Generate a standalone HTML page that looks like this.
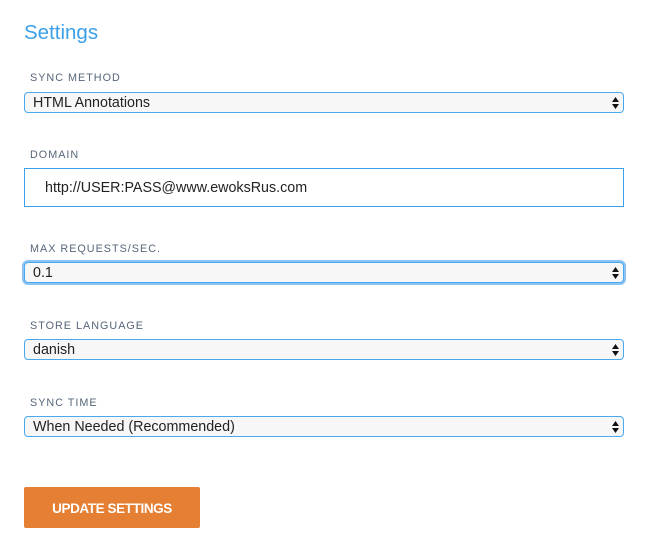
<!DOCTYPE html>
<html><head><style>
body{margin:0;background:#fff;font-family:"Liberation Sans",sans-serif;width:656px;height:555px;position:relative;overflow:hidden}
h1{position:absolute;left:24px;top:21px;margin:0;font-size:20.5px;font-weight:normal;color:#3ba0e8}
.l{position:absolute;left:30px;font-size:10.8px;letter-spacing:1px;color:#56667a}
.s{position:absolute;left:24px;width:598px;height:19px;border:1px solid #49a8ee;border-radius:4px;background:#f7f7f7;font-size:14.3px;color:#222;line-height:19px;box-sizing:content-box}
.s span{position:absolute;left:8px;top:1px}
.ar{position:absolute;right:4px;top:4px;width:7px;height:12px}
.f{box-shadow:0 0 0 2px #8cc3f5}
.i{position:absolute;left:24px;top:168px;width:598px;height:37px;border:1px solid #3aa0ec;font-size:14.3px;color:#222;line-height:38px}
.b{position:absolute;left:24px;top:487px;width:176px;height:41px;background:#e57f33;border-radius:2px;color:#fff;font-size:13.5px;letter-spacing:-0.4px;font-weight:bold;text-align:center;line-height:43px}
</style></head><body>
<h1>Settings</h1>
<div class="l" style="top:72px">SYNC METHOD</div>
<div class="s" style="top:92px"><span>HTML Annotations</span><svg class="ar" viewBox="0 0 7 12"><path d="M3.5 0L7 5H0z M0 7H7L3.5 12z" fill="#111"/></svg></div>
<div class="l" style="top:149px">DOMAIN</div>
<div class="i"><span style="position:absolute;left:20px">http://USER:PASS@www.ewoksRus.com</span></div>
<div class="l" style="top:243px">MAX REQUESTS/SEC.</div>
<div class="s f" style="top:262px"><span>0.1</span><svg class="ar" viewBox="0 0 7 12"><path d="M3.5 0L7 5H0z M0 7H7L3.5 12z" fill="#111"/></svg></div>
<div class="l" style="top:320px">STORE LANGUAGE</div>
<div class="s" style="top:339px"><span>danish</span><svg class="ar" viewBox="0 0 7 12"><path d="M3.5 0L7 5H0z M0 7H7L3.5 12z" fill="#111"/></svg></div>
<div class="l" style="top:397px">SYNC TIME</div>
<div class="s" style="top:416px"><span>When Needed (Recommended)</span><svg class="ar" viewBox="0 0 7 12"><path d="M3.5 0L7 5H0z M0 7H7L3.5 12z" fill="#111"/></svg></div>
<div class="b">UPDATE SETTINGS</div>
</body></html>
